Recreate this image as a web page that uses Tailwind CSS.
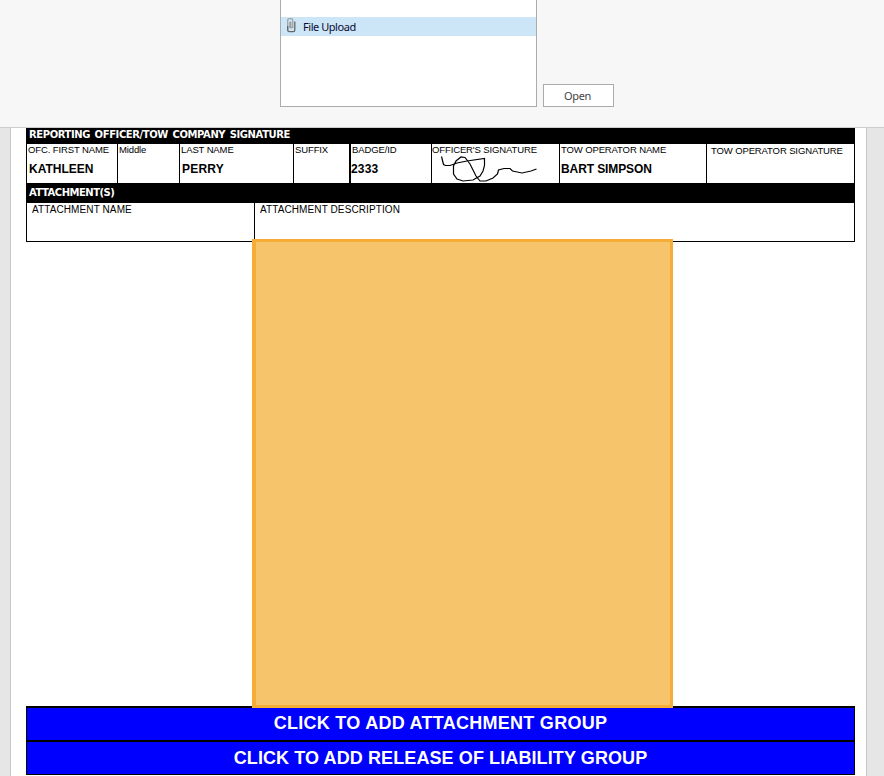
<!DOCTYPE html>
<html lang="en">
<head>
    <meta charset="UTF-8">
    <meta name="viewport" content="width=device-width, initial-scale=1.0">
    <title>Tow Report</title>
    <script src="https://cdn.jsdelivr.net/npm/@tailwindcss/browser@4"></script>
</head>
<body class="bg-[#e6e6e6] h-[776px] overflow-hidden flex flex-col font-['Liberation_Sans',sans-serif] text-black">
    <!-- top panel -->
    <header class="h-32 shrink-0 bg-[#f7f7f7] border-b border-[#cccccc] flex pl-[280px] gap-1.5 font-['Noto_Sans',sans-serif] text-[11px]">
        <ul class="w-[257px] h-[107px] pt-[17px] bg-white border border-t-0 border-[#ababab]">
            <li class="h-[19px] bg-[#cde6f7] flex items-start pl-1.5">
                <svg class="w-[9px] h-[15px] mt-px shrink-0" viewBox="0 0 9 15" fill="none">
                    <path d="M0.700 12.500V2.500Q0.700 0.700 2.500 0.700H4Q5.700 0.700 5.700 2.500V9.500H2.800V4" stroke="#a3a3a3" stroke-width="1.300"/>
                    <path d="M0.700 8V12Q0.700 13.700 2.300 13.700H6.300Q7.800 13.700 7.800 12V3.500" stroke="#666666" stroke-width="1.300"/>
                    <path d="M3.800 3.500V9" stroke="#8a8a8a" stroke-width="1"/>
                </svg>
                <span class="ml-[7px] pt-[2px] tracking-[-0.45px] leading-4 whitespace-nowrap text-[#0a0a32]">File Upload</span>
            </li>
        </ul>
        <button type="button" class="mt-[84px] w-[71px] h-[23px] pr-0.5 bg-white border border-[#ababab] leading-none tracking-[-0.3px] text-[#444444]">Open</button>
    </header>

    <!-- report page -->
    <main class="relative ml-2.5 w-[857px] grow bg-white border-x border-[#c6c6c6] pl-[15px]">
        <div class="w-[829px] h-full flex flex-col">
            <h2 class="h-4 bg-black text-white font-['DejaVu_Sans',sans-serif] font-bold text-[10px] leading-[14px] pl-[3px] whitespace-nowrap"><span class="tracking-[-0.4px] [word-spacing:1.4px]">REPORTING OFFICER/TOW COMPANY SIGNATURE</span></h2>
            <!-- officer / tow operator -->
            <div class="h-[39px] flex border-x border-black text-[9.5px] leading-3 tracking-[-0.12px] whitespace-nowrap">
                <div class="w-[91px] border-r pl-px">
                    <div>OFC. FIRST NAME</div>
                    <div class="mt-1.5 pl-px text-xs leading-[14px] tracking-normal font-bold">KATHLEEN</div>
                </div>
                <div class="w-[62px] border-r pl-px">
                    <div>Middle</div>
                </div>
                <div class="w-[114px] border-r pl-px">
                    <div>LAST NAME</div>
                    <div class="mt-1.5 pl-px text-xs leading-[14px] tracking-[0.2px] font-bold">PERRY</div>
                </div>
                <div class="w-[57px] border-r-2 pl-px">
                    <div>SUFFIX</div>
                </div>
                <div class="w-[81px] border-r">
                    <div class="pl-px">BADGE/ID</div>
                    <div class="mt-1.5 text-xs leading-[14px] tracking-[0.2px] font-bold">2333</div>
                </div>
                <div class="w-[128px] border-r">
                    <div>OFFICER'S SIGNATURE</div>
                    <svg class="w-[127px] h-[27px]" viewBox="0 0 127 27" fill="none" stroke="#000" stroke-width="1.2">
                        <path d="M9.500 0.500L10.500 4.500L11.500 8.500L13.500 9.500H18L25 7L35 5L52.500 2.500V9.500L51 15L48 20L41 24L31 25L25 23L21.500 18V10L24 5L29 1L33 1.500L38 8L44 20L48 25H54L61 22L65.500 18L66.500 14L72 12.500H78L80.500 15L90 17L99 15L104.500 13"/>
                    </svg>
                </div>
                <div class="w-[147px] border-r pl-px">
                    <div>TOW OPERATOR NAME</div>
                    <div class="mt-1.5 text-xs leading-[14px] tracking-[-0.1px] font-bold">BART SIMPSON</div>
                </div>
                <div class="grow pl-1 pt-px">
                    <div>TOW OPERATOR SIGNATURE</div>
                </div>
            </div>
            <h2 class="h-5 bg-black text-white font-['DejaVu_Sans',sans-serif] font-bold text-[10px] leading-5 pl-[3px]"><span class="tracking-[-0.5px]">ATTACHMENT(S)</span></h2>
            <!-- attachments -->
            <div class="h-[39px] flex border border-t-0 border-black text-[10px] leading-[14px] tracking-[0.1px] whitespace-nowrap">
                <div class="w-[228px] border-r pl-[5px]">ATTACHMENT NAME</div>
                <div class="pl-[5px]">ATTACHMENT DESCRIPTION</div>
            </div>
            <!-- group buttons -->
            <div class="mt-[464px] flex flex-col text-white text-lg font-bold text-center">
                <button type="button" class="h-9 pb-0.5 bg-[#0000ff] border-x border-y-2 border-black leading-[28px] tracking-[0.27px]">CLICK TO ADD ATTACHMENT GROUP</button>
                <button type="button" class="h-[33px] bg-[#0000ff] border border-t-0 border-black leading-[28px] tracking-[0.1px]">CLICK TO ADD RELEASE OF LIABILITY GROUP</button>
            </div>
        </div>
        <!-- highlighted drop area over the form edges -->
        <div class="absolute left-[241px] top-[111px] w-[421px] h-[469px] bg-[#f5c46b] border-3 border-l-4 border-[#f5ad35]"></div>
    </main>
</body>
</html>
